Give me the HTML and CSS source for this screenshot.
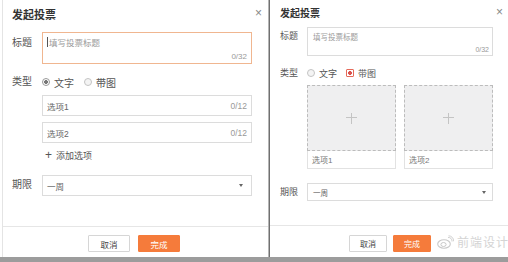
FILE: index.html
```html
<!DOCTYPE html>
<html lang="zh">
<head>
  <meta charset="UTF-8" />
  <title>发起投票</title>
  <link rel="stylesheet" href="styles.css">
</head>
<body>
  <div class="screen">

    <section class="dialog dialog-text">
      <header class="dialog-head">
        <span class="dialog-title">发起投票</span>
        <span class="close">×</span>
      </header>

      <div class="row row-title">
        <label>标题</label>
        <div class="field area focus">
          <span class="ph"><i class="caret"></i>填写投票标题</span>
          <span class="count">0/32</span>
        </div>
      </div>

      <div class="row row-type">
        <label>类型</label>
        <div class="radios">
          <span class="radio on">文字</span>
          <span class="radio">带图</span>
        </div>
      </div>

      <div class="row row-opts">
        <label></label>
        <div class="stack">
          <div class="field line"><span class="val">选项1</span><span class="count">0/12</span></div>
          <div class="field line"><span class="val">选项2</span><span class="count">0/12</span></div>
          <div class="add"><span class="plus">+</span>添加选项</div>
        </div>
      </div>

      <div class="row row-term">
        <label>期限</label>
        <div class="field select"><span class="val">一周</span><span class="arrow"></span></div>
      </div>

      <footer class="dialog-foot">
        <button class="btn">取消</button>
        <button class="btn primary">完成</button>
      </footer>
    </section>

    <section class="dialog dialog-pic">
      <header class="dialog-head">
        <span class="dialog-title">发起投票</span>
        <span class="close">×</span>
      </header>

      <div class="row row-title">
        <label>标题</label>
        <div class="field area">
          <span class="ph">填写投票标题</span>
          <span class="count">0/32</span>
        </div>
      </div>

      <div class="row row-type">
        <label>类型</label>
        <div class="radios">
          <span class="radio">文字</span>
          <span class="radio on">带图</span>
        </div>
      </div>

      <div class="row row-opts">
        <label></label>
        <div class="cards">
          <div class="card">
            <div class="pic"><span class="pic-plus"></span></div>
            <div class="caption">选项1</div>
          </div>
          <div class="card">
            <div class="pic"><span class="pic-plus"></span></div>
            <div class="caption">选项2</div>
          </div>
        </div>
      </div>

      <div class="row row-term">
        <label>期限</label>
        <div class="field select"><span class="val">一周</span><span class="arrow"></span></div>
      </div>

      <footer class="dialog-foot">
        <button class="btn">取消</button>
        <button class="btn primary">完成</button>
        <span class="mark">
          <svg width="17" height="14" viewBox="0 0 17 14">
            <ellipse cx="7" cy="9" rx="6.3" ry="4.3" fill="none" stroke="#c9c9c9" stroke-width="1.1"/>
            <ellipse cx="6.5" cy="9.5" rx="2.6" ry="2" fill="none" stroke="#c9c9c9" stroke-width="1"/>
            <path d="M11 2.5a3.5 3.5 0 0 1 4 4M11.5 0.8a5.2 5.2 0 0 1 5.2 5.5" fill="none" stroke="#d0d0d0" stroke-width="1"/>
          </svg>
          <span class="mark-text">前端设计</span>
        </span>
      </footer>
    </section>

  </div>
  <div class="strip"></div>
</body>
</html>
```

FILE: styles.css
```css
* {
  box-sizing: border-box;
}
body {
  margin: 0;
  width: 508px;
  height: 262px;
  overflow: hidden;
  background: #fff;
  font-family: "Liberation Sans", "Noto Sans CJK SC", sans-serif;
  color: #555;
}
.screen {
  display: flex;
  height: 257px;
}
.strip {
  height: 5px;
  background: #9c9c9c;
}

/* dialog shell */
.dialog {
  display: flex;
  flex-direction: column;
  background: #fff;
}
.dialog-text {
  width: 267px;
  margin-left: 2px;
  padding: 0 16px 0 9px;
  border-left: 1px solid #e4e4e4;
  border-right: 1px solid #b5b5b5;
}
.dialog-pic {
  width: 239px;
  padding: 0 15px 0 10px;
  border-left: 1px solid #707070;
}
.dialog-head {
  display: flex;
  justify-content: space-between;
  align-items: flex-start;
  margin-right: -12px;
}
.dialog-title {
  font-weight: bold;
  color: #333;
}
.close {
  color: #888;
  font-size: 12px;
  line-height: 1;
}

/* rows */
.row {
  display: flex;
  align-items: flex-start;
}
.row label {
  flex: none;
  color: #555;
}
.field {
  flex: 1;
  display: flex;
  justify-content: space-between;
  border: 1px solid #dcdcdc;
  background: #fff;
}
.stack .field {
  flex: none;
}
.area {
  flex-direction: column;
}
.area.focus {
  border-color: #f0b690;
}
.ph {
  color: #9a9a9a;
  display: flex;
  align-items: center;
}
.caret {
  display: inline-block;
  width: 1px;
  background: #555;
  margin-right: 1px;
}
.count {
  color: #999;
  align-self: flex-end;
}
.line, .select {
  align-items: center;
}
.val {
  color: #666;
}
.arrow {
  width: 0;
  height: 0;
  border-left: 2.5px solid transparent;
  border-right: 2.5px solid transparent;
  border-top: 3px solid #666;
}
.radios {
  display: flex;
  align-items: center;
}
.radio {
  display: flex;
  align-items: center;
  color: #555;
}
.radio::before {
  content: "";
  width: 8px;
  height: 8px;
  border-radius: 50%;
  border: 1px solid #c4c4c4;
  box-sizing: border-box;
  margin-right: 4px;
  background: #f4f4f4;
}
.radio.on::before {
  border-color: #999;
  background: radial-gradient(circle, #777 0 1.6px, #fff 2.2px);
}
.stack {
  flex: 1;
  display: flex;
  flex-direction: column;
}
.add {
  display: flex;
  align-items: center;
  color: #555;
}
.plus {
  font-size: 12px;
  color: #555;
  margin-right: 4px;
}

/* image cards */
.cards {
  flex: 1;
  display: grid;
  grid-template-columns: 1fr 1fr;
  gap: 8px;
}
.pic {
  height: 66px;
  background: #efeff0;
  border: 1px dashed #bcbcbc;
  display: flex;
  align-items: center;
  justify-content: center;
}
.pic-plus {
  width: 11px;
  height: 11px;
  background:
    linear-gradient(#c4c4c4, #c4c4c4) center / 11px 1.4px no-repeat,
    linear-gradient(#c4c4c4, #c4c4c4) center / 1.4px 11px no-repeat;
}
.caption {
  height: 18px;
  border: 1px solid #e2e2e2;
  border-top: none;
  font-size: 8px;
  color: #777;
  display: flex;
  align-items: center;
  padding-left: 4px;
}

/* footer */
.dialog-foot {
  margin-top: auto;
  display: flex;
  align-items: flex-start;
  border-top: 1px solid #e6e6e6;
  margin-left: -9px;
  margin-right: -16px;
}
.btn {
  flex: none;
  height: 17px;
  padding: 0;
  font-family: inherit;
  border: 1px solid #d6d6d6;
  background: #fff;
  color: #444;
  border-radius: 1px;
}
.btn.primary {
  background: #f57b3b;
  border-color: #f57b3b;
  color: #fff;
}
.mark {
  flex: none;
  display: flex;
  align-items: center;
  white-space: nowrap;
  margin-top: -2px;
}
.mark-text {
  color: #d4d4d4;
  font-size: 12px;
  margin-left: 3px;
  letter-spacing: 1px;
}

/* left dialog sizes */
.dialog-text .dialog-head {
  padding-top: 9px;
  height: 24px;
}
.dialog-text .dialog-title {
  font-size: 11px;
  line-height: 13px;
}
.dialog-text .close {
  margin-top: -2px;
  margin-right: 2px;
}
.dialog-text .row label {
  width: 30px;
  font-size: 10px;
  line-height: 14px;
}
.dialog-text .row-title {
  margin-top: 8px;
}
.dialog-text .row-title label {
  margin-top: 4px;
}
.dialog-text .area {
  height: 32px;
  padding: 3px 4px 2px 4px;
  font-size: 8.5px;
}
.dialog-text .caret {
  height: 10px;
}
.dialog-text .count {
  font-size: 8px;
}
.dialog-text .row-type {
  margin-top: 11px;
  height: 14px;
  align-items: center;
}
.dialog-text .radio {
  font-size: 10px;
  margin-right: 10px;
}
.dialog-text .row-opts {
  margin-top: 6px;
}
.dialog-text .line {
  height: 21px;
  padding: 0 4px;
  font-size: 8.5px;
  margin-bottom: 6px;
}
.dialog-text .line .count {
  align-self: center;
  font-size: 8.5px;
}
.dialog-text .add {
  font-size: 9px;
  height: 12px;
  padding-left: 3px;
}
.dialog-text .row-term {
  margin-top: 14px;
}
.dialog-text .row-term label {
  margin-top: 3px;
}
.dialog-text .select {
  height: 21px;
  padding: 0 8px 0 4px;
  font-size: 8.5px;
}
.dialog-text .dialog-foot {
  height: 31px;
  padding-top: 8px;
  padding-left: 85px;
  gap: 8px;
}
.dialog-text .btn {
  width: 42px;
  font-size: 8.5px;
}

/* right dialog sizes */
.dialog-pic .dialog-head {
  padding-top: 8px;
  height: 21px;
}
.dialog-pic .dialog-title {
  font-size: 10px;
  line-height: 12px;
}
.dialog-pic .close {
  margin-top: -2px;
  margin-right: 2px;
}
.dialog-pic .row label {
  width: 27px;
  font-size: 9px;
  line-height: 12px;
}
.dialog-pic .row-title {
  margin-top: 6px;
}
.dialog-pic .row-title label {
  margin-top: 3px;
}
.dialog-pic .area {
  height: 29px;
  padding: 3px 3px 2px 5px;
  font-size: 7.5px;
}
.dialog-pic .count {
  font-size: 7px;
}
.dialog-pic .row-type {
  margin-top: 11px;
  height: 12px;
  align-items: center;
}
.dialog-pic .radio {
  font-size: 9px;
  margin-right: 9px;
}
.dialog-pic .radio.on::before {
  border-color: #e56a5a;
  border-radius: 1px;
  background: radial-gradient(circle, #d9534f 0 1.6px, #fff 2.2px);
}
.dialog-pic .row-opts {
  margin-top: 6px;
}
.dialog-pic .row-term {
  margin-top: 14px;
}
.dialog-pic .row-term label {
  margin-top: 3px;
}
.dialog-pic .select {
  height: 18px;
  padding: 0 6px 0 5px;
  font-size: 7.5px;
}
.dialog-pic .dialog-foot {
  height: 32px;
  padding-top: 9px;
  padding-left: 79px;
  margin-left: -10px;
  margin-right: -15px;
  gap: 6px;
}
.dialog-pic .btn {
  width: 38px;
  font-size: 8px;
}
```
